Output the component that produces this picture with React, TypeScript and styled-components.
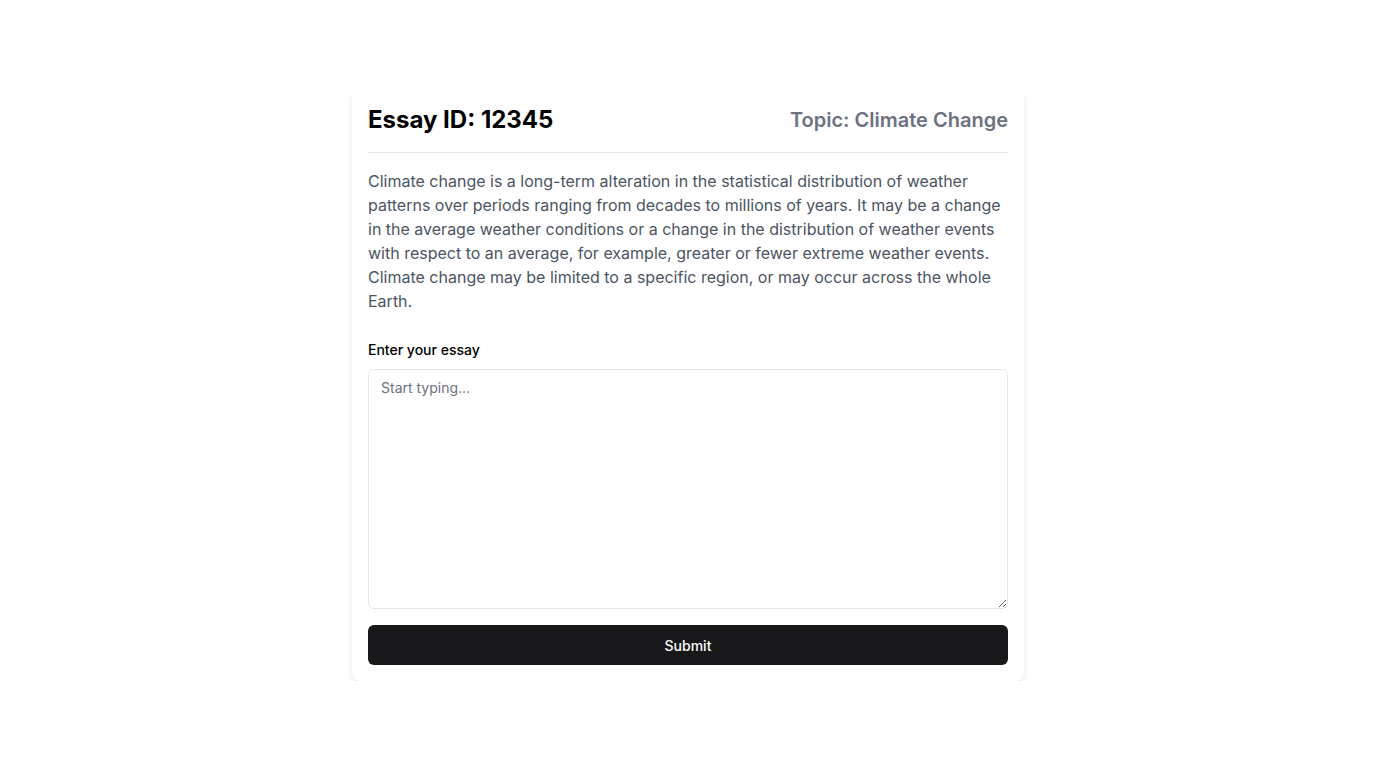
import React from "react";
import styled, { createGlobalStyle } from "styled-components";

const Global = createGlobalStyle`
  html, body { margin: 0; padding: 0; background: #ffffff; }
  body { font-family: Inter, "Noto Sans", sans-serif; color: #000; }
  * { box-sizing: border-box; }
`;

const Page = styled.main`
  display: flex;
  justify-content: center;
  padding-top: 88px;
`;

const Card = styled.section`
  width: 672px;
  background: #fff;
  border-radius: 8px;
  box-shadow: 0 4px 6px -1px rgba(0, 0, 0, 0.1), 0 2px 4px -2px rgba(0, 0, 0, 0.1);
  padding: 16px;
  display: flex;
  flex-direction: column;
`;

const Header = styled.header`
  display: flex;
  justify-content: space-between;
  align-items: center;
  padding-bottom: 16px;
  border-bottom: 1px solid #e5e7eb;
`;

const Title = styled.h1`
  margin: 0;
  font-size: 24px;
  line-height: 32px;
  font-weight: 700;
  color: #000;
`;

const Topic = styled.h2`
  margin: 0;
  font-size: 20px;
  line-height: 28px;
  font-weight: 600;
  color: #6b7280;
`;

const Prompt = styled.p`
  margin: 16px 0 0;
  font-size: 16px;
  line-height: 24px;
  color: #4b5563;
`;

const Form = styled.form`
  margin-top: 27px;
  display: flex;
  flex-direction: column;
`;

const Label = styled.label`
  font-size: 14px;
  line-height: 20px;
  font-weight: 500;
  color: #000;
  margin-bottom: 9px;
`;

const TextArea = styled.textarea`
  width: 100%;
  height: 240px;
  border: 1px solid #e5e7eb;
  border-radius: 6px;
  padding: 8px 12px;
  font-family: Inter, "Noto Sans", sans-serif;
  font-size: 14px;
  line-height: 20px;
  color: #000;
  resize: vertical;
  outline: none;
  &::placeholder { color: #6b7280; }
`;

const Button = styled.button`
  margin-top: 16px;
  height: 40px;
  border: none;
  border-radius: 6px;
  background: #18181b;
  color: #fafafa;
  font-family: Inter, "Noto Sans", sans-serif;
  font-size: 14px;
  font-weight: 500;
  cursor: pointer;
`;

export default function App() {
  return (
    <>
      <Global />
      <Page>
        <Card>
          <Header>
            <Title>Essay ID: 12345</Title>
            <Topic>Topic: Climate Change</Topic>
          </Header>
          <Prompt>
            Climate change is a long-term alteration in the statistical distribution of weather
            patterns over periods ranging from decades to millions of years. It may be a change
            in the average weather conditions or a change in the distribution of weather events
            with respect to an average, for example, greater or fewer extreme weather events.
            Climate change may be limited to a specific region, or may occur across the whole
            Earth.
          </Prompt>
          <Form onSubmit={(e) => e.preventDefault()}>
            <Label htmlFor="essay">Enter your essay</Label>
            <TextArea id="essay" placeholder="Start typing..." />
            <Button type="submit">Submit</Button>
          </Form>
        </Card>
      </Page>
    </>
  );
}
